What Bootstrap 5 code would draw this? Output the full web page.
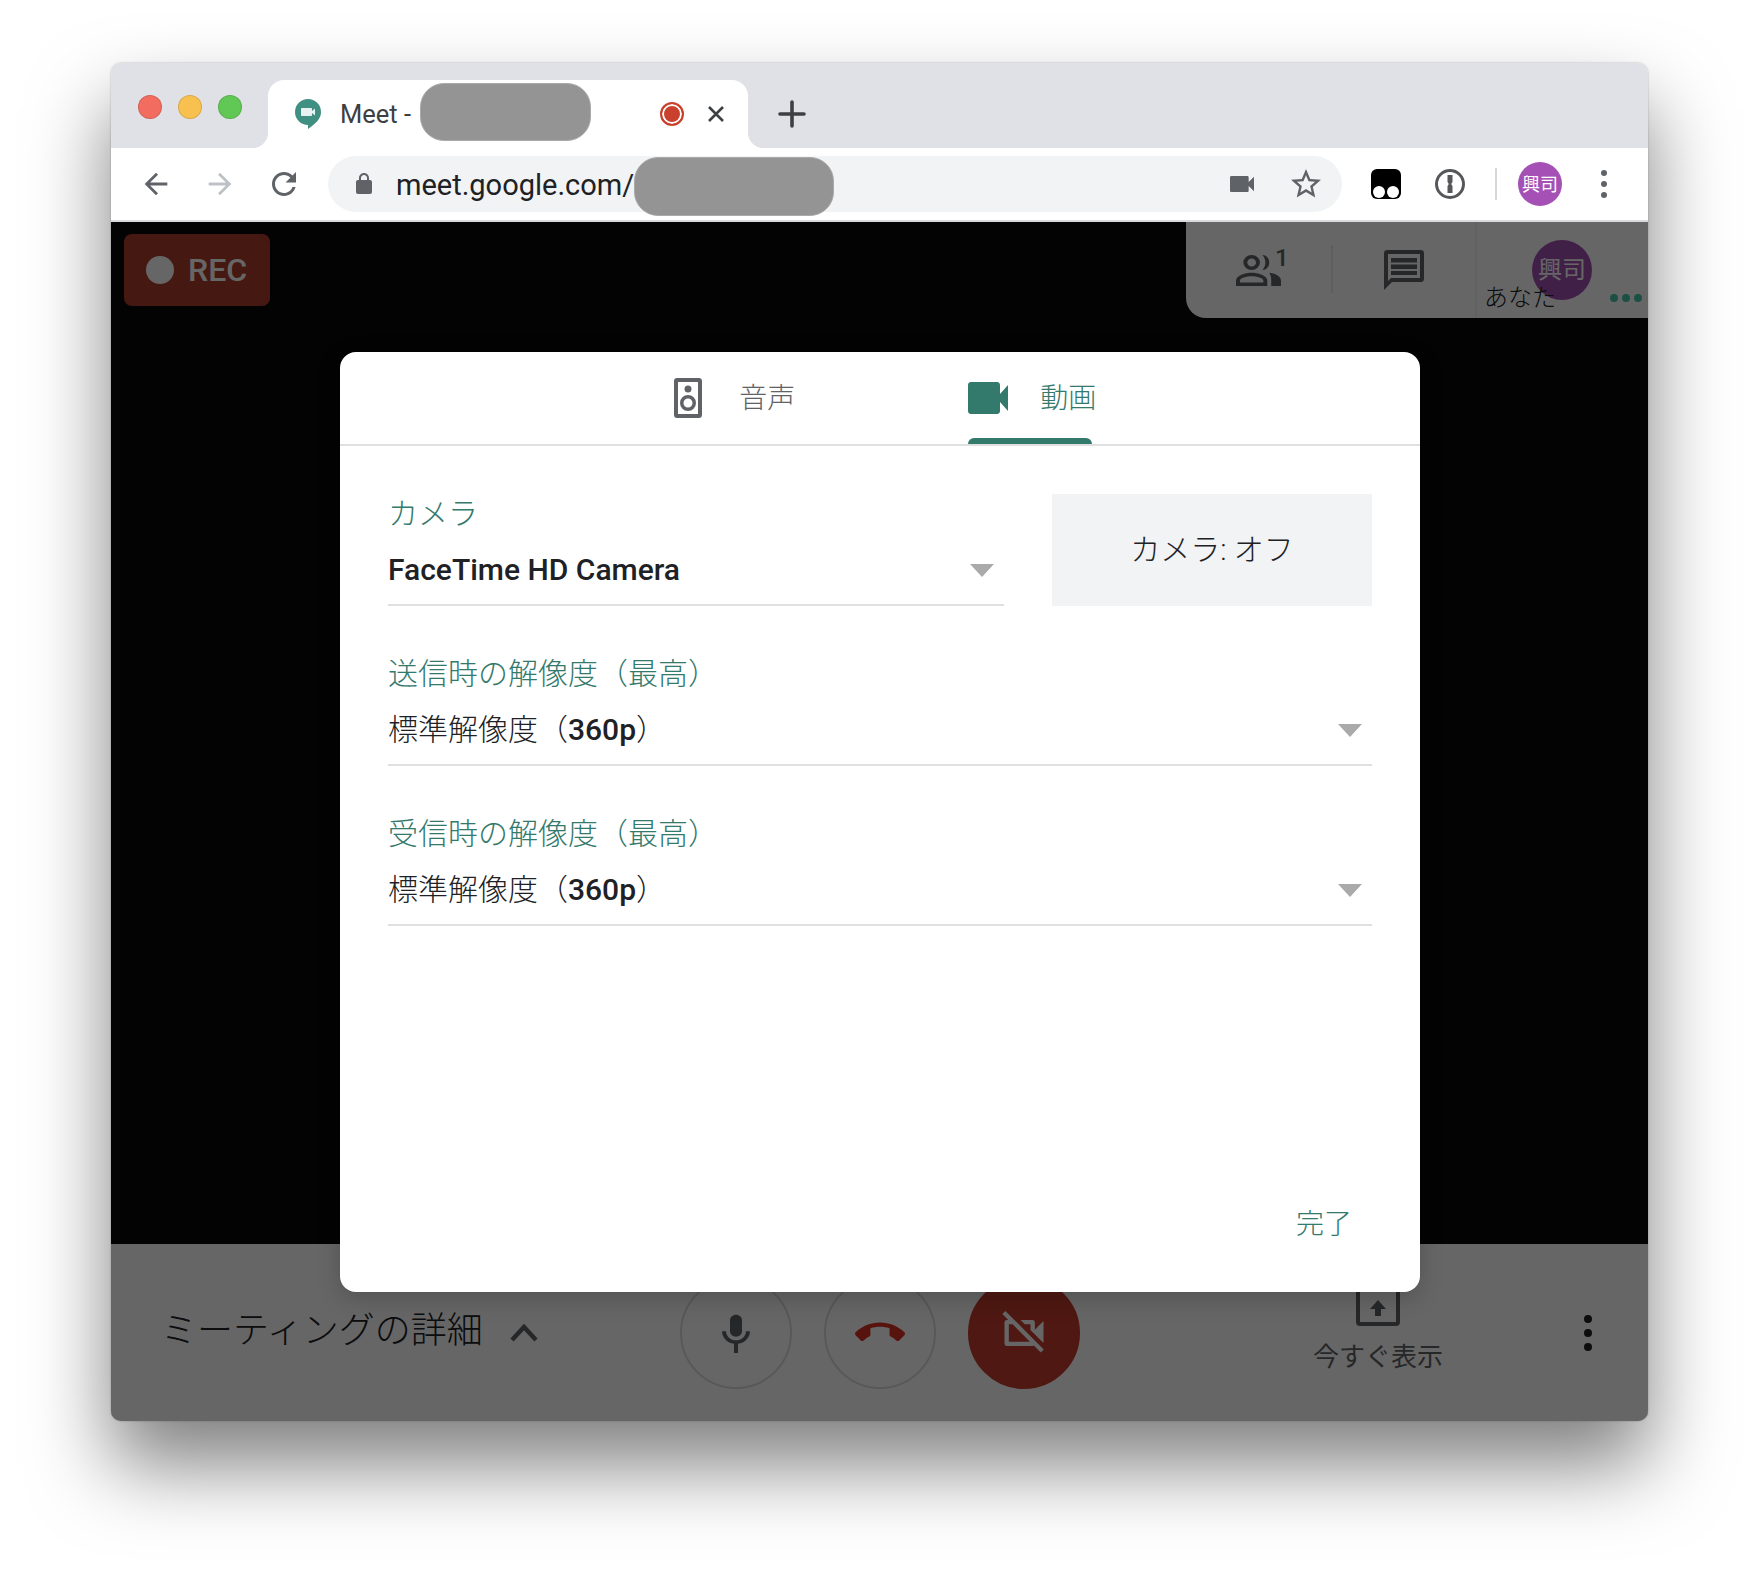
<!DOCTYPE html>
<html lang="ja">
<head>
    <meta charset="UTF-8">
    <meta name="viewport" content="width=device-width, initial-scale=1.0">
    <title>Meet</title>
    <link rel="stylesheet" href="https://cdn.jsdelivr.net/npm/bootstrap@5.3.3/dist/css/bootstrap.min.css">
    <style>
        html, body { height: 100%; }
        body {
            margin: 0;
            background: #fff;
            font-family: Roboto, "Noto Sans CJK JP", sans-serif;
            padding: 63px 0 0 111px;
            overflow: hidden;
        }
        .win {
            width: 1537px;
            height: 1358px;
            border-radius: 10px;
            overflow: hidden;
        }
        .win-shadow {
            width: 1537px;
            height: 1358px;
            border-radius: 10px;
            box-shadow: 0 44px 80px 0 rgba(0, 0, 0, .5), 0 0 2px rgba(0, 0, 0, .3);
        }

        /* tab strip */
        .strip { height: 85px; background: #dfe1e6; padding: 17px 0 0 27px; }
        .light { width: 24px; height: 24px; border-radius: 50%; margin-top: 15px; margin-right: 16px; border: 1px solid rgba(0,0,0,.12); }
        .light-r { background: #f26d60; }
        .light-y { background: #f8c14f; }
        .light-g { background: #62c855; }
        .chrome-tab {
            width: 480px;
            margin-left: 10px;
            background: #fff;
            border-radius: 16px 16px 0 0;
            padding: 0 23px 0 27px;
            font-size: 25.500px;
            color: #3c4043;
        }
        .chrome-tab::before, .chrome-tab::after {
            content: "";
            position: absolute;
            bottom: 0;
            width: 16px;
            height: 16px;
        }
        .chrome-tab::before { left: -16px; background: radial-gradient(circle at 0 0, transparent 16px, #fff 16.5px); }
        .chrome-tab::after { right: -16px; background: radial-gradient(circle at 100% 0, transparent 16px, #fff 16.5px); }
        .tab-title { margin-left: 19px; }
        .rec-dot { width: 24px; height: 24px; border-radius: 50%; background: #c9402c; border: 2px solid #c9402c; box-shadow: inset 0 0 0 2px #fff; margin-right: 23px; }
        .tab-x { width: 18px; height: 18px; }
        .new-tab { margin-left: 26px; width: 36px; height: 36px; }
        .redact {
            position: absolute;
            background: #949494;
            border: 1px solid #aaa;
            border-radius: 24px;
        }
        .redact-tab { left: 309px; top: 20px; width: 171px; height: 58px; }
        .redact-url { left: 523px; top: 94px; width: 200px; height: 59px; }

        /* toolbar */
        .tools { height: 74px; background: #fff; padding: 0 0 0 13px; border-bottom: 2px solid #d9dadd; }
        .tool-btn { width: 64px; height: 64px; flex: none; }
        .omni {
            width: 1014px;
            height: 56px;
            margin-left: 12px;
            background: #f1f3f4;
            border-radius: 28px;
            padding: 0 18px 0 24px;
        }
        .omni-url { font-size: 29px; line-height: 36px; padding-top: 2px; color: #202124; margin-left: 20px; }
        .omni-star { margin-left: 30px; }
        .tool-sep { flex: none; width: 2px; height: 32px; background: #d5d6d9; margin: 0 10px 0 13px; }
        .tools-avatar {
            width: 44px;
            height: 44px;
            border-radius: 50%;
            background: #a450b5;
            color: #fff;
            font-size: 18px;
            margin: 0 10px 0 11px;
        }
        .tool-first { margin-left: 12px; }

        /* meeting page */
        .stage { background: #080808; min-height: 0; }
        .rec-pill {
            width: 146px;
            height: 72px;
            margin: 12px 0 0 13px;
            background: #b03c2d;
            border-radius: 8px;
            color: #fff;
            font-size: 32px;
            font-weight: 500;
            gap: 14px;
            padding-left: 22px;
        }
        .rec-pill i { width: 28px; height: 28px; border-radius: 50%; background: #fff; }
        .side-panel {
            width: 462px;
            height: 96px;
            background: #fff;
            border-bottom-left-radius: 20px;
        }
        .panel-cell { height: 96px; }
        .panel-people { width: 145px; }
        .panel-rule { width: 2px; height: 48px; margin-top: 23px; background: #ececec; }
        .panel-chat { width: 144px; border-right: 2px solid #f6f6f6; }
        .panel-me { flex: 1; }
        .panel-count { position: absolute; left: 89px; top: 24px; font-size: 24px; font-weight: 500; color: #5f6368; line-height: 1; }
        .panel-avatar { position: absolute; left: 55px; top: 18px; width: 60px; height: 60px; border-radius: 50%; background: #a450b5; color: #fff; font-size: 24px; }
        .panel-name { position: absolute; left: 7px; top: 59px; font-size: 24px; line-height: 34px; color: #202124; font-weight: 300; }
        .panel-dots { position: absolute; left: 133px; top: 72px; gap: 4px; }
        .panel-dots i { width: 8px; height: 8px; border-radius: 50%; background: #48c8aa; }

        .bottom-bar {
            height: 177px;
            background: #fff;
            display: grid;
            grid-template-columns: 1fr auto 1fr;
            align-items: center;
        }
        .meet-info { padding-left: 50px; font-size: 36px; font-weight: 300; color: #202124; gap: 27px; }
        .meet-info span { padding-bottom: 3px; }
        .call-btns { gap: 32px; }
        .call-btn { width: 112px; height: 112px; border-radius: 50%; border: 2px solid #dadce0; background: #fff; }
        .call-btn-off { background: #c53c2e; border-color: #c53c2e; }
        .bar-right { padding-right: 55px; }
        .present { width: 150px; color: #5f6368; font-size: 26px; margin-right: 130px; padding-bottom: 10px; }
        .present span { line-height: 32px; margin-top: 15px; }

        /* scrim and dialog */
        .scrim { position: absolute; inset: 0; background: rgba(0, 0, 0, .6); }
        .dlg {
            position: absolute;
            left: 229px;
            top: 130px;
            width: 1080px;
            height: 940px;
            background: #fff;
            border-radius: 16px;
            box-shadow: 0 6px 24px rgba(0, 0, 0, .2);
        }
        .dlg-tabs { height: 94px; border-bottom: 2px solid #e0e0e0; gap: 173px; padding-left: 10px; }
        .dlg-tab { height: 92px; gap: 32px; font-size: 28px; color: #5f6368; font-weight: 300; }
        .dlg-tab span { padding-top: 2px; }
        .dlg-tab-audio { gap: 37.700px; }
        .dlg-tab-on { color: #33796c; }
        .dlg-tab-on::after {
            content: "";
            position: absolute;
            left: 0;
            bottom: 0;
            width: 124px;
            height: 6px;
            background: #33796c;
            border-radius: 6px 6px 0 0;
        }
        .dlg-body { padding: 48px 48px 0; gap: 48px; }
        .field { height: 112px; border-bottom: 2px solid #e0e0e0; }
        .field-label { height: 36px; line-height: 40px; font-size: 30px; color: #33796c; font-weight: 300; }
        .field-value { height: 40px; line-height: 40px; margin-top: 20px; font-size: 30px; color: #202124; padding-right: 10px; font-weight: 300; }
        .field-value b { font-weight: 500; }
        .caret-down { width: 0; height: 0; border: 12px solid transparent; border-top: 13px solid #aaa; border-bottom: 0; }
        .cam-off { width: 320px; height: 112px; background: #f1f3f4; font-size: 30px; color: #202124; padding-bottom: 2px; font-weight: 300; flex: none; }
        .cam-row { gap: 48px; }
        .dlg-done { padding: 0 68px 49px 0; }
        .done-btn { font-size: 28px; line-height: 36px; color: #33796c; font-weight: 300; border: 0; padding: 0; }
    </style>
</head>
<body>
<div class="win-shadow">
<div class="win d-flex flex-column position-relative">

    <!-- tab strip -->
    <div class="strip d-flex flex-shrink-0">
        <div class="light light-r"></div>
        <div class="light light-y"></div>
        <div class="light light-g"></div>
        <div class="chrome-tab position-relative d-flex align-items-center">
            <svg width="26" height="30" viewBox="0 0 26 30">
                <path d="M13 0a13 13 0 0 1 13 13c0 6-4 10-9 14l-4 3v-4A13 13 0 0 1 13 0z" fill="#3f8f83"/>
                <path d="M7 9h9c.6 0 1 .4 1 1v2l3-2.500v7L17 14v2c0 .6-.4 1-1 1H7c-.6 0-1-.4-1-1v-6c0-.6.4-1 1-1z" fill="#e8f3f1"/>
            </svg>
            <span class="tab-title">Meet -</span>
            <span class="rec-dot ms-auto"></span>
            <svg class="tab-x" viewBox="0 0 18 18"><path d="M2 2l14 14M16 2L2 16" stroke="#3c4043" stroke-width="2.600" fill="none"/></svg>
        </div>
        <svg class="new-tab align-self-center" viewBox="0 0 36 36"><path d="M18 6v24M6 18h24" stroke="#3c4043" stroke-width="3.600" stroke-linecap="round"/></svg>
    </div>

    <!-- toolbar -->
    <div class="tools d-flex align-items-center flex-shrink-0">
        <div class="tool-btn d-flex align-items-center justify-content-center">
            <svg width="34" height="34" viewBox="0 0 24 24" fill="#5f6368"><path d="M20 11H7.830l5.590-5.590L12 4l-8 8 8 8 1.410-1.410L7.830 13H20v-2z"/></svg>
        </div>
        <div class="tool-btn d-flex align-items-center justify-content-center">
            <svg width="34" height="34" viewBox="0 0 24 24" fill="#bdc1c6"><path d="M12 4l-1.410 1.410L16.170 11H4v2h12.170l-5.580 5.590L12 20l8-8z"/></svg>
        </div>
        <div class="tool-btn d-flex align-items-center justify-content-center">
            <svg width="36" height="36" viewBox="0 0 24 24" fill="#5f6368"><path d="M17.650 6.350C16.200 4.900 14.210 4 12 4c-4.420 0-7.990 3.580-7.990 8s3.570 8 7.990 8c3.730 0 6.840-2.550 7.730-6h-2.080c-.82 2.330-3.040 4-5.650 4-3.310 0-6-2.690-6-6s2.690-6 6-6c1.660 0 3.140.69 4.220 1.780L13 11h7V4l-2.350 2.350z"/></svg>
        </div>
        <div class="omni d-flex align-items-center flex-shrink-0">
            <svg width="24" height="24" viewBox="0 0 24 24" fill="#5f6368"><path d="M18 8h-1V6c0-2.760-2.240-5-5-5S7 3.240 7 6v2H6c-1.100 0-2 .9-2 2v10c0 1.100.9 2 2 2h12c1.100 0 2-.9 2-2V10c0-1.100-.9-2-2-2zM9 6c0-1.660 1.340-3 3-3s3 1.340 3 3v2H9V6z"/></svg>
            <span class="omni-url">meet.google.com/</span>
            <svg class="ms-auto" width="32" height="32" viewBox="0 0 24 24" fill="#5f6368"><path d="M17 10.500V7c0-.55-.45-1-1-1H4c-.55 0-1 .45-1 1v10c0 .55.45 1 1 1h12c.55 0 1-.45 1-1v-3.500l4 4v-11l-4 4z"/></svg>
            <svg class="omni-star" width="36" height="36" viewBox="0 0 24 24" fill="#5f6368"><path d="M22 9.240l-7.190-.62L12 2 9.190 8.630 2 9.240l5.460 4.730L5.820 21 12 17.270 18.180 21l-1.630-7.030L22 9.240zM12 15.400l-3.760 2.270 1-4.280-3.320-2.880 4.380-.38L12 6.100l1.710 4.040 4.380.38-3.320 2.880 1 4.280L12 15.400z"/></svg>
        </div>
        <div class="tool-btn tool-first d-flex align-items-center justify-content-center">
            <svg width="32" height="32" viewBox="0 0 32 32">
                <rect x="1" y="1" width="30" height="30" rx="6" fill="#000"/>
                <circle cx="9" cy="24" r="6" fill="#fff"/>
                <circle cx="23" cy="24" r="6" fill="#fff"/>
            </svg>
        </div>
        <div class="tool-btn d-flex align-items-center justify-content-center">
            <svg width="32" height="32" viewBox="0 0 32 32">
                <circle cx="16" cy="16" r="13.500" fill="#fff" stroke="#55575a" stroke-width="3"/>
                <path d="M13.500 7h5v7l-1.300 2 1.300 2v7h-5v-7l1.300-2-1.300-2z" fill="#55575a"/>
            </svg>
        </div>
        <div class="tool-sep"></div>
        <div class="tools-avatar d-flex align-items-center justify-content-center flex-shrink-0">興司</div>
        <div class="tool-btn d-flex align-items-center justify-content-center">
            <svg width="8" height="30" viewBox="0 0 8 30" fill="#5f6368"><circle cx="4" cy="4" r="3"/><circle cx="4" cy="15" r="3"/><circle cx="4" cy="26" r="3"/></svg>
        </div>
    </div>

    <!-- meeting page -->
    <div class="stage flex-grow-1 d-flex flex-column position-relative">
        <div class="flex-grow-1 d-flex justify-content-between align-items-start">
            <div class="rec-pill d-flex align-items-center"><i></i>REC</div>
            <div class="side-panel d-flex">
                <div class="panel-cell panel-people d-flex align-items-center justify-content-center position-relative">
                    <svg width="45" height="31" viewBox="0 2 46 35" preserveAspectRatio="none" fill="#5f6368">
                        <path d="M16 2a8.500 8.500 0 1 1 0 17 8.500 8.500 0 0 1 0-17zm0 4a4.500 4.500 0 1 0 0 9 4.500 4.500 0 0 0 0-9z"/>
                        <path d="M16 22c6 0 16 3 16 9v6H0v-6c0-6 10-9 16-9zm0 4c-5 0-12 2-12 5v2h24v-2c0-3-7-5-12-5z"/>
                        <path d="M27 2c4 0 7 3.800 7 8.500S31 19 27 19c2-2.400 3-5.300 3-8.500S29 4.400 27 2z"/>
                        <path d="M34 22c6 1 12 4 12 9v6H36v-7c0-3.200-.8-5.600-2-8z"/>
                    </svg>
                    <span class="panel-count">1</span>
                </div>
                <div class="panel-rule"></div>
                <div class="panel-cell panel-chat d-flex align-items-center justify-content-center">
                    <svg width="40" height="40" viewBox="0 0 40 40" fill="#5f6368">
                        <path d="M3 0h34c1.700 0 3 1.300 3 3v26c0 1.700-1.300 3-3 3H8l-8 8V3c0-1.700 1.300-3 3-3zm1 4v27l3-3h29V4z"/>
                        <path d="M7 8h26v4.500H7zM7 14.500h26V19H7zM7 21h26v4H7z"/>
                    </svg>
                </div>
                <div class="panel-cell panel-me position-relative">
                    <div class="panel-avatar d-flex align-items-center justify-content-center">興司</div>
                    <div class="panel-name">あなた</div>
                    <div class="panel-dots d-flex"><i></i><i></i><i></i></div>
                </div>
            </div>
        </div>

        <div class="bottom-bar flex-shrink-0">
            <div class="meet-info d-flex align-items-center">
                <span>ミーティングの詳細</span>
                <svg width="28" height="18" viewBox="0 0 28 18"><path d="M2 16L14 3l12 13" fill="none" stroke="#5f6368" stroke-width="4.500"/></svg>
            </div>
            <div class="call-btns d-flex">
                <div class="call-btn d-flex align-items-center justify-content-center">
                    <svg width="40" height="40" viewBox="2 1 20 22" preserveAspectRatio="none" fill="#5f6368"><path d="M12 14c1.660 0 3-1.340 3-3V5c0-1.660-1.340-3-3-3S9 3.340 9 5v6c0 1.660 1.340 3 3 3z"/><path d="M17 11c0 2.760-2.240 5-5 5s-5-2.240-5-5H5c0 3.530 2.610 6.430 6 6.920V23h2v-5.080c3.390-.49 6-3.390 6-6.920h-2z"/></svg>
                </div>
                <div class="call-btn d-flex align-items-center justify-content-center">
                    <svg width="50" height="50" viewBox="0 0 24 24" fill="#d93025"><path d="M12 9c-1.600 0-3.150.25-4.600.72v3.100c0 .39-.23.74-.56.9-.98.49-1.870 1.120-2.660 1.850-.18.18-.43.28-.7.28-.28 0-.53-.11-.71-.29L.29 13.080c-.18-.17-.29-.42-.29-.7 0-.28.11-.53.29-.71C3.340 8.780 7.460 7 12 7s8.660 1.780 11.710 4.670c.18.18.29.43.29.71 0 .28-.11.53-.29.71l-2.480 2.480c-.18.18-.43.29-.71.29-.27 0-.52-.11-.7-.28-.79-.74-1.690-1.360-2.670-1.850-.33-.16-.56-.5-.56-.9v-3.100C15.150 9.250 13.600 9 12 9z"/></svg>
                </div>
                <div class="call-btn call-btn-off d-flex align-items-center justify-content-center">
                    <svg width="52" height="52" viewBox="0 0 24 24" fill="#fff"><path d="M9.560 8l-2-2-4.150-4.140L2 3.270 4.730 6H4c-.55 0-1 .45-1 1v10c0 .55.45 1 1 1h12c.21 0 .39-.08.55-.18L19.730 21l1.410-1.410-8.860-8.860L9.560 8zM5 16V8h1.730l8 8H5zm10-8v2.610l6 6V6.500l-4 4V7c0-.55-.45-1-1-1h-5.610l2 2H15z"/></svg>
                </div>
            </div>
            <div class="bar-right d-flex justify-content-end align-items-center">
                <div class="present d-flex flex-column align-items-center">
                    <svg width="44" height="44" viewBox="0 0 44 44">
                        <rect x="2" y="2" width="40" height="40" rx="2" fill="none" stroke="#5f6368" stroke-width="4"/>
                        <path d="M22 18l8 9h-5v7h-6v-7h-5z" fill="#5f6368"/>
                    </svg>
                    <span>今すぐ表示</span>
                </div>
                <svg width="10" height="38" viewBox="0 0 10 38" fill="#202124"><circle cx="5" cy="5" r="4"/><circle cx="5" cy="19" r="4"/><circle cx="5" cy="33" r="4"/></svg>
            </div>
        </div>

        <div class="scrim"></div>

        <!-- settings dialog -->
        <div class="dlg d-flex flex-column">
            <div class="dlg-tabs d-flex justify-content-center flex-shrink-0">
                <div class="dlg-tab dlg-tab-audio d-flex align-items-center">
                    <svg width="28" height="40" viewBox="0 0 28 40" fill="#5f6368">
                        <path d="M3 0h22c1.700 0 3 1.300 3 3v34c0 1.700-1.300 3-3 3H3c-1.700 0-3-1.300-3-3V3c0-1.700 1.300-3 3-3zm1 4v32h20V4z"/>
                        <circle cx="14" cy="11" r="3.500"/>
                        <path d="M14 17a8 8 0 1 1 0 16 8 8 0 0 1 0-16zm0 3.500a4.500 4.500 0 1 0 0 9 4.500 4.500 0 0 0 0-9z"/>
                    </svg>
                    <span>音声</span>
                </div>
                <div class="dlg-tab dlg-tab-on d-flex align-items-center position-relative">
                    <svg width="40" height="32" viewBox="0 0 40 32" fill="#33796c"><path d="M3 0h26c1.700 0 3 1.300 3 3v9l8-9v26l-8-9v9c0 1.700-1.300 3-3 3H3c-1.700 0-3-1.300-3-3V3c0-1.700 1.300-3 3-3z"/></svg>
                    <span>動画</span>
                </div>
            </div>

            <div class="dlg-body d-flex flex-column">
                <div class="cam-row d-flex">
                    <div class="field flex-grow-1">
                        <div class="field-label">カメラ</div>
                        <div class="field-value d-flex align-items-center justify-content-between">
                            <b>FaceTime HD Camera</b>
                            <span class="caret-down"></span>
                        </div>
                    </div>
                    <div class="cam-off d-flex align-items-center justify-content-center">カメラ: オフ</div>
                </div>
                <div class="field">
                    <div class="field-label">送信時の解像度（最高）</div>
                    <div class="field-value d-flex align-items-center justify-content-between">
                        <span>標準解像度（<b>360p</b>）</span>
                        <span class="caret-down"></span>
                    </div>
                </div>
                <div class="field">
                    <div class="field-label">受信時の解像度（最高）</div>
                    <div class="field-value d-flex align-items-center justify-content-between">
                        <span>標準解像度（<b>360p</b>）</span>
                        <span class="caret-down"></span>
                    </div>
                </div>
            </div>

            <div class="dlg-done mt-auto d-flex justify-content-end">
                <button type="button" class="btn done-btn rounded-0">完了</button>
            </div>
        </div>
    </div>

    <div class="redact redact-tab"></div>
    <div class="redact redact-url"></div>
</div>
</div>
</body>
</html>
